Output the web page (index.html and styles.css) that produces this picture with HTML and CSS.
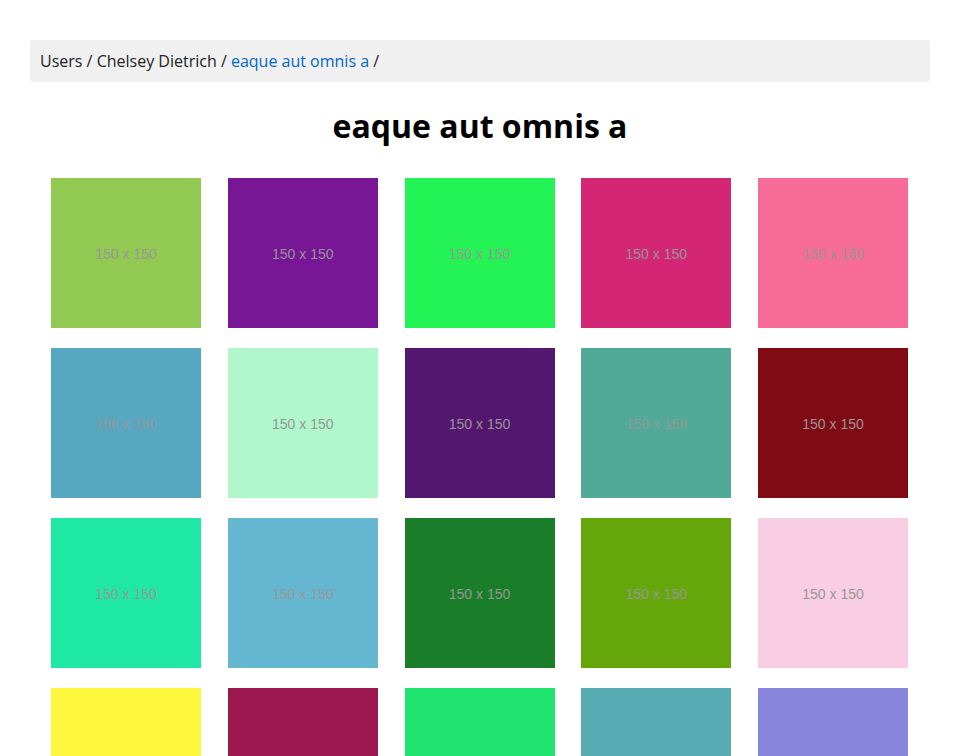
FILE: index.html
```html
<!DOCTYPE html>
<html>
<head>
<meta charset="utf-8">
<link rel="stylesheet" href="styles.css">
</head>
<body>
<div class="container">
  <nav class="crumbs"><span>Users</span> / <span>Chelsey Dietrich</span> / <a href="#">eaque aut omnis a</a> /</nav>
  <h1 class="title">eaque aut omnis a</h1>
  <div class="grid">
    <div class="tile" style="background:#92c952">150 x 150</div>
    <div class="tile" style="background:#771796">150 x 150</div>
    <div class="tile" style="background:#24f355">150 x 150</div>
    <div class="tile" style="background:#d32776">150 x 150</div>
    <div class="tile" style="background:#f66b97">150 x 150</div>
    <div class="tile" style="background:#56a8c2">150 x 150</div>
    <div class="tile" style="background:#b0f7cc">150 x 150</div>
    <div class="tile" style="background:#54176f">150 x 150</div>
    <div class="tile" style="background:#51aa97">150 x 150</div>
    <div class="tile" style="background:#810b14">150 x 150</div>
    <div class="tile" style="background:#1ee8a4">150 x 150</div>
    <div class="tile" style="background:#66b7d2">150 x 150</div>
    <div class="tile" style="background:#197d29">150 x 150</div>
    <div class="tile" style="background:#65a70a">150 x 150</div>
    <div class="tile" style="background:#f9cee5">150 x 150</div>
    <div class="tile" style="background:#fdf73e">150 x 150</div>
    <div class="tile" style="background:#9c184f">150 x 150</div>
    <div class="tile" style="background:#1fe46f">150 x 150</div>
    <div class="tile" style="background:#56acb2">150 x 150</div>
    <div class="tile" style="background:#8985dc">150 x 150</div>
  </div>
</div>
</body>
</html>
```
FILE: styles.css
```css
html, body {
  margin: 0;
  padding: 0;
  background: #ffffff;
}
body {
  font-family: "Open Sans", "Liberation Sans", sans-serif;
  color: #222222;
}
.container {
  width: 900px;
  margin: 0 0 0 30px;
  padding-top: 40px;
}
.crumbs {
  background: #f0f0f0;
  border-radius: 3px;
  height: 42px;
  line-height: 42px;
  box-sizing: border-box;
  padding: 0 10px;
  font-size: 16px;
  color: #222222;
}
.crumbs a {
  color: #0066cc;
  text-decoration: none;
}
.title {
  margin: 24px 0 32px;
  text-align: center;
  font-size: 32px;
  line-height: 40px;
  font-weight: 700;
  color: #000000;
}
.grid {
  display: grid;
  grid-template-columns: repeat(5, 150px);
  column-gap: 26.75px;
  row-gap: 20px;
  justify-content: start;
  padding-left: 21px;
}
.tile {
  width: 150px;
  height: 150px;
  box-sizing: border-box;
  padding-top: 2px;
  display: flex;
  align-items: center;
  justify-content: center;
  font-family: "Liberation Sans", Arial, sans-serif;
  font-size: 14px;
  color: #969696;
}
```
